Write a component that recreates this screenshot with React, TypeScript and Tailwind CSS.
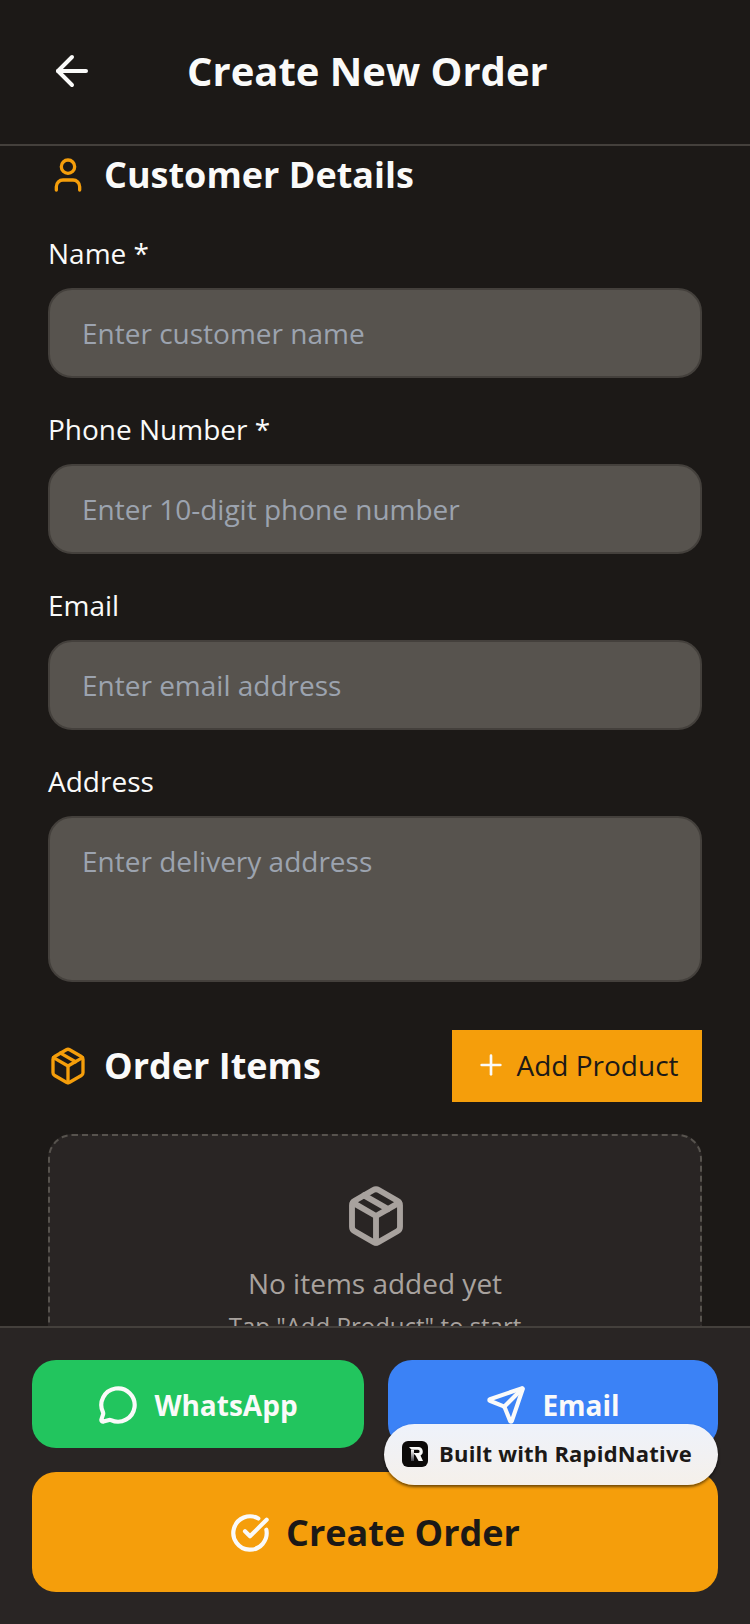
import React from "react";
import { ArrowLeft, User, Package, Plus, MessageCircle, Send, CircleCheckBig } from "lucide-react";

function Field({ label, placeholder, tall }: { label: string; placeholder: string; tall?: boolean }) {
  return (
    <div className="flex flex-col">
      <div className="h-[38px] text-[28px] leading-[38px] text-[#fafaf9]">{label}</div>
      <div
        className={`mt-[16px] rounded-[24px] border-2 border-[#44403c] bg-[#57534e] px-[32px] text-[28px] leading-[38px] text-[#9ca3af] ${
          tall ? "h-[166px] pt-[24px]" : "flex h-[90px] items-center"
        }`}
      >
        {placeholder}
      </div>
    </div>
  );
}

export default function App() {
  return (
    <div className="relative flex h-[1624px] w-[750px] flex-col overflow-hidden bg-[#1c1917] font-['Open_Sans',sans-serif]">
      <header className="flex h-[146px] shrink-0 items-center border-b-2 border-[#44403c] pb-[2px] pl-[48px]">
        <ArrowLeft size={48} strokeWidth={2} color="#fafaf9" />
        <h1 className="ml-[91px] text-[40px] font-bold text-[#fafaf9]">Create New Order</h1>
      </header>

      <main className="min-h-0 flex-1 overflow-hidden px-[48px]">
        <div className="flex h-[58px] items-center">
          <User size={40} strokeWidth={2} color="#f59e0b" />
          <h2 className="ml-[16px] text-[36px] font-bold text-[#fafaf9]">Customer Details</h2>
        </div>
        <div className="mt-[30px] flex flex-col gap-[32px]">
          <Field label="Name *" placeholder="Enter customer name" />
          <Field label="Phone Number *" placeholder="Enter 10-digit phone number" />
          <Field label="Email" placeholder="Enter email address" />
          <Field label="Address" placeholder="Enter delivery address" tall />
        </div>
        <div className="mt-[48px] flex h-[72px] items-center justify-between">
          <div className="flex items-center">
            <Package size={40} strokeWidth={2} color="#f59e0b" />
            <h2 className="ml-[16px] text-[36px] font-bold text-[#fafaf9]">Order Items</h2>
          </div>
          <button className="flex h-[72px] w-[250px] items-center justify-center gap-[9px] bg-[#f59e0b] pb-[2px] text-[28px] text-[#1c1917]">
            <Plus size={32} strokeWidth={2} color="#fafaf9" />
            Add Product
          </button>
        </div>
        <div className="mt-[32px] flex h-[300px] flex-col items-center rounded-[24px] border-2 border-dashed border-[#57534e] bg-[#292524] pt-[48px]">
          <Package size={64} strokeWidth={2.2} color="#a8a29e" className="ml-[2px]" />
          <div className="mt-[16px] text-[28px] leading-[38px] text-[#a8a29e]">No items added yet</div>
          <div className="mt-[8px] text-[24px] leading-[32px] text-[#a8a29e]">Tap "Add Product" to start</div>
        </div>
      </main>

      <footer className="flex h-[298px] shrink-0 flex-col gap-[24px] border-t-2 border-[#44403c] bg-[#292524] px-[32px] pt-[32px]">
        <div className="flex gap-[24px]">
          <button className="flex h-[88px] w-[332px] items-center justify-center gap-[16px] rounded-[24px] bg-[#22c55e] pt-[2px] text-[28px] font-bold text-[#fafaf9]">
            <MessageCircle size={40} strokeWidth={2.5} color="#fafaf9" />
            WhatsApp
          </button>
          <button className="flex h-[88px] w-[330px] items-center justify-center gap-[16px] rounded-[24px] bg-[#3b82f6] pt-[2px] text-[28px] font-bold text-[#fafaf9]">
            <Send size={40} strokeWidth={2.5} color="#fafaf9" />
            Email
          </button>
        </div>
        <button className="flex h-[120px] items-center justify-center gap-[16px] rounded-[24px] bg-[#f59e0b] pt-[2px] text-[36px] font-bold text-[#1c1917]">
          <CircleCheckBig size={40} strokeWidth={2.5} color="#fafaf9" />
          Create Order
        </button>
      </footer>

      <div className="absolute left-[384px] top-[1424px] flex h-[61px] w-[334px] items-center rounded-full bg-gradient-to-b from-[#eef2fb] to-[#f5f0ea] pb-[2px] pl-[18px] shadow-[0_2px_3px_rgba(0,0,0,0.55)]">
        <svg width="26" height="26" viewBox="0 0 26 26">
          <defs>
            <linearGradient id="stem" x1="0" y1="0" x2="0" y2="1">
              <stop offset="0" stopColor="#fafaf9" />
              <stop offset="1" stopColor="#3f3f46" />
            </linearGradient>
          </defs>
          <rect width="26" height="26" rx="6" fill="#0c0a09" />
          <path d="M7 6h9.5a4.5 4.5 0 0 1 2 8.4L21 20h-4.4l-3-5.5L11 12h5a1.6 1.6 0 0 0 0-3.2H9.5z" fill="#fafaf9" />
          <path d="M9 9h3v11H9z" fill="url(#stem)" />
        </svg>
        <span className="ml-[11px] text-[22px] font-bold tracking-[0.2px] text-[#1c1917]">Built with RapidNative</span>
      </div>
    </div>
  );
}
